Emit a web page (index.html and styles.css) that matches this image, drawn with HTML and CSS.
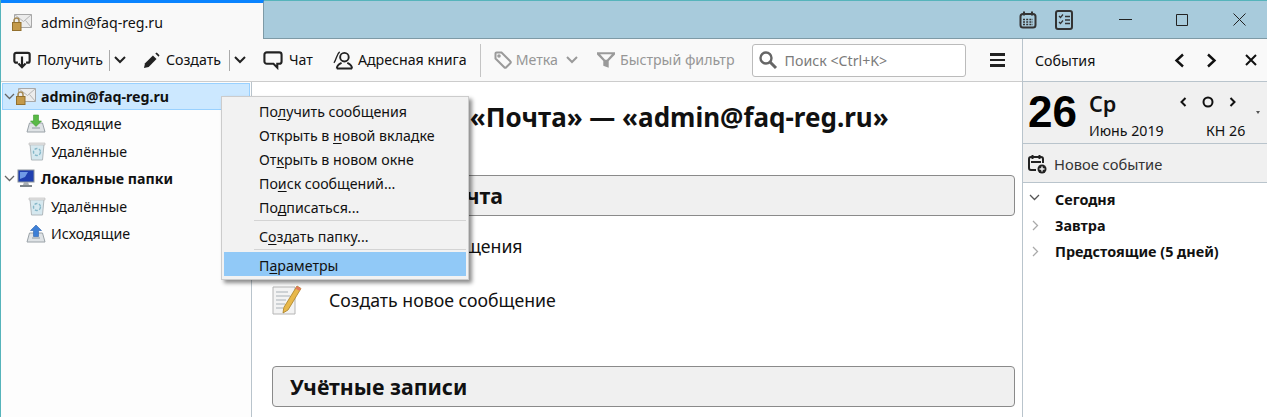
FILE: index.html
```html
<!DOCTYPE html>
<html lang="ru">
<head>
    <meta charset="UTF-8">
    <meta name="viewport" content="width=device-width, initial-scale=1.0">
    <title>admin@faq-reg.ru</title>
    <link rel="stylesheet" href="styles.css">
</head>
<body>
    <div class="window">
        <!-- Title bar with the open tab and window buttons -->
        <header class="titlebar">
            <div class="tab">
                <svg class="tab-icon" width="20" height="17" viewBox="0 0 20 17">
                    <path d="M2.5.5h17v13h-17z" fill="#ececec" stroke="#a8a8a8"/>
                    <path d="M2.5.5l9 7 8-7M19.500 13.500l-6-7" fill="none" stroke="#b4b4b4"/>
                    <path d="M2 9V6.500a2.500 2.500 0 0 1 5 0V9" fill="none" stroke="#a58a55" stroke-width="1.500"/>
                    <rect x=".5" y="8.500" width="8.500" height="8" fill="#c49a4a" stroke="#93702e"/>
                </svg>
                <span>admin@faq-reg.ru</span>
            </div>
            <div class="title-tools">
                <svg width="18" height="18" viewBox="0 0 18 18" fill="none" stroke="#333" stroke-width="2">
                    <rect x="1.500" y="3" width="15" height="13.500" rx="2.500"/>
                    <path d="M5 .5v4M13 .5v4"/>
                    <path d="M4 8.500h10M4 11h10M4 13.500h10" stroke-dasharray="2 1.200" stroke-width="1.600"/>
                </svg>
                <svg width="18" height="20" viewBox="0 0 18 20" fill="none" stroke="#333">
                    <rect x="1" y="1" width="16" height="18" rx="2" stroke-width="2"/>
                    <path d="M4 6l1.500 1.500L8 4.500M4 12l1.500 1.500L8 10.500" stroke-width="1.200"/>
                    <path d="M10 6.500h5M10 10h5M10 13.500h5" stroke-width="1.300"/>
                </svg>
            </div>
            <div class="win-buttons">
                <svg width="13" height="13" viewBox="0 0 13 13" fill="none" stroke="#222"><path d="M0 6.500h13"/></svg>
                <svg width="13" height="13" viewBox="0 0 13 13" fill="none" stroke="#222"><path d="M.5 1.500h11v11H.5z"/></svg>
                <svg width="13" height="13" viewBox="0 0 13 13" fill="none" stroke="#222"><path d="M.5.5l12 12M12.500.5l-12 12"/></svg>
            </div>
        </header>

        <div class="workspace">
            <div class="mail-area">
                <!-- Mail toolbar -->
                <div class="toolbar">
                    <svg class="tb-get" width="18" height="18" viewBox="0 0 20 20" fill="none" stroke="#222" stroke-width="2.400">
                        <path d="M5.500 13H3.500a2 2 0 0 1-2-2V4a2 2 0 0 1 2-2h13a2 2 0 0 1 2 2v7a2 2 0 0 1-2 2h-2"/>
                        <path d="M10 6v12M6 14l4 4 4-4"/>
                    </svg>
                    <span class="tb-label">Получить</span>
                    <span class="tb-split"></span>
                    <svg class="tb-drop" width="12" height="8" viewBox="0 0 12 8" fill="none" stroke="#222" stroke-width="2"><path d="M1 1l5 5 5-5"/></svg>
                    <svg class="tb-write" width="17" height="17" viewBox="0 0 18 18"><path d="M1 17l1.200-5L10.500 3.700l3.800 3.800L6 15.800z" fill="#222"/><path d="M13 1.500l1.500-1 3 3-1 1.500z" fill="#222"/></svg>
                    <span class="tb-label">Создать</span>
                    <span class="tb-split tb-split-2"></span>
                    <svg class="tb-drop tb-drop-2" width="12" height="8" viewBox="0 0 12 8" fill="none" stroke="#222" stroke-width="2"><path d="M1 1l5 5 5-5"/></svg>
                    <svg class="tb-chat" width="20" height="20" viewBox="0 0 21 20" fill="none" stroke="#222" stroke-width="2.200"><path d="M4 2h13a2.500 2.500 0 0 1 2.500 2.500v7A2.500 2.500 0 0 1 17 14h-2v4l-4-4H4a2.500 2.500 0 0 1-2.500-2.500v-7A2.500 2.500 0 0 1 4 2z"/></svg>
                    <span class="tb-label">Чат</span>
                    <svg class="tb-book" width="20" height="20" viewBox="0 0 21 20" fill="none" stroke="#222" stroke-width="2">
                        <circle cx="12" cy="7" r="4.500"/>
                        <path d="M4 19c0-4 3-5 5-6M20 19c0-4-3-5-5-6M4 19h16"/>
                        <path d="M7 1.500C3.500 4 4 9 1 13" stroke-width="1.400"/>
                    </svg>
                    <span class="tb-label">Адресная книга</span>
                    <span class="tb-sep"></span>
                    <svg class="tb-tag" width="18" height="18" viewBox="0 0 18 18" fill="none" stroke="#9a9a9a" stroke-width="2"><path d="M1.500 2.500a1 1 0 0 1 1-1h5L16.500 10.500a1 1 0 0 1 0 1.500l-4.500 4.500a1 1 0 0 1-1.500 0L1.500 7.500z"/><circle cx="5" cy="5" r=".8"/></svg>
                    <span class="tb-label off">Метка</span>
                    <svg class="tb-drop-off" width="12" height="8" viewBox="0 0 12 8" fill="none" stroke="#9a9a9a" stroke-width="2"><path d="M1 1l5 5 5-5"/></svg>
                    <svg class="tb-filter" width="18" height="18" viewBox="0 0 20 19" fill="#9a9a9a"><path d="M0 1h20v2.500l-7 7V18l-6-2v-5.500l-7-7zM3.500 3.200l5.500 6h2l5.500-6z" fill-rule="evenodd"/></svg>
                    <span class="tb-label off">Быстрый фильтр</span>
                    <div class="search">
                        <svg width="20" height="20" viewBox="0 0 20 20" fill="none" stroke="#666"><circle cx="8" cy="8" r="5.500" stroke-width="2.400"/><path d="M12 12l6 6" stroke-width="3"/></svg>
                        <span>Поиск &lt;Ctrl+K&gt;</span>
                    </div>
                    <div class="hamburger"><i></i><i></i><i></i></div>
                </div>

                <div class="panes">
                    <!-- Folder tree -->
                    <nav class="folders">
                        <div class="row account selected">
                            <svg class="twisty" width="11" height="7" viewBox="0 0 11 7" fill="none" stroke="#666" stroke-width="1.300"><path d="M1 1l4.500 4.500L10 1"/></svg>
                            <svg class="account-icon" width="20" height="17" viewBox="0 0 20 17">
                                <path d="M2.500.5h17v13h-17z" fill="#ececec" stroke="#a8a8a8"/>
                                <path d="M2.500.5l9 7 8-7M19.500 13.500l-6-7" fill="none" stroke="#b4b4b4"/>
                                <path d="M2 9V6.500a2.500 2.500 0 0 1 5 0V9" fill="none" stroke="#a58a55" stroke-width="1.500"/>
                                <rect x=".5" y="8.500" width="8.500" height="8" fill="#c49a4a" stroke="#93702e"/>
                            </svg>
                            <b>admin@faq-reg.ru</b>
                        </div>
                        <div class="row folder">
                            <svg width="20" height="20" viewBox="0 0 20 20">
                                <path d="M1 18l2.500-9h13l2.500 9z" fill="#dfe3e6" stroke="#9aa2a8"/>
                                <path d="M6 13h8v2H6z" fill="#b8bfc4"/>
                                <path d="M7.500 1h5v6h3L10 12.500 4.500 7h3z" fill="#58b947" stroke="#3f9a33" stroke-width=".6"/>
                            </svg>
                            <span>Входящие</span>
                        </div>
                        <div class="row folder">
                            <svg class="bin" width="18" height="20" viewBox="0 0 18 20">
                                <path d="M2 3h14l-1.500 16h-11z" fill="#d6e8ef" stroke="#b0b8bc"/>
                                <path d="M1 2h16v2H1z" fill="#e6e6e6" stroke="#b8b8b8" stroke-width=".6"/>
                                <circle cx="9" cy="11" r="3.500" fill="none" stroke="#86b8c9" stroke-width="1.400" stroke-dasharray="3 1.500"/>
                            </svg>
                            <span>Удалённые</span>
                        </div>
                        <div class="row account">
                            <svg class="twisty" width="11" height="7" viewBox="0 0 11 7" fill="none" stroke="#666" stroke-width="1.300"><path d="M1 1l4.500 4.500L10 1"/></svg>
                            <svg class="account-icon" width="20" height="19" viewBox="0 0 20 19">
                                <rect x="2" y="1" width="16" height="12" fill="#1f3fb0" stroke="#8b949b"/>
                                <path d="M4 3h8l-3 5-5 2z" fill="#6f9ae6"/>
                                <path d="M8 13h4l1 3H7z" fill="#a9afb4"/>
                                <path d="M4 16h12v2H4z" fill="#7d858b"/>
                            </svg>
                            <b>Локальные папки</b>
                        </div>
                        <div class="row folder">
                            <svg class="bin" width="18" height="20" viewBox="0 0 18 20">
                                <path d="M2 3h14l-1.500 16h-11z" fill="#d6e8ef" stroke="#b0b8bc"/>
                                <path d="M1 2h16v2H1z" fill="#e6e6e6" stroke="#b8b8b8" stroke-width=".6"/>
                                <circle cx="9" cy="11" r="3.500" fill="none" stroke="#86b8c9" stroke-width="1.400" stroke-dasharray="3 1.500"/>
                            </svg>
                            <span>Удалённые</span>
                        </div>
                        <div class="row folder">
                            <svg width="20" height="20" viewBox="0 0 20 20">
                                <path d="M1 18l2.500-9h13l2.500 9z" fill="#dfe3e6" stroke="#9aa2a8"/>
                                <path d="M6 13h8v2H6z" fill="#b8bfc4"/>
                                <path d="M7.500 12.500h5v-6h3L10 1 4.500 6.500h3z" fill="#3d7fd6" stroke="#2b62ad" stroke-width=".6"/>
                            </svg>
                            <span>Исходящие</span>
                        </div>
                    </nav>

                    <!-- Account overview page -->
                    <main class="content">
                        <h1>Thunderbird «Почта» — «admin@faq-reg.ru»</h1>
                        <h2 class="section first">Электронная почта</h2>
                        <div class="action action-read">Прочитать сообщения</div>
                        <div class="action">
                            <svg width="30" height="32" viewBox="0 0 30 32">
                                <path d="M1 3h22v27H1z" fill="#f3f3f3" stroke="#b5b5b5"/>
                                <path d="M4 8h12M4 12h14M4 16h10M4 20h9M4 24h7" stroke="#c2c8cc" stroke-width="1.500"/>
                                <path d="M25 2l4 2.500L16 26l-5 3 .8-5.500z" fill="#e8b84a" stroke="#a77f25" stroke-width=".8"/>
                                <path d="M25 2l4 2.500-1.500 2.500-4-2.500z" fill="#e2795e"/>
                            </svg>
                            <span>Создать новое сообщение</span>
                        </div>
                        <h2 class="section second">Учётные записи</h2>
                    </main>
                </div>
            </div>

            <!-- Events sidebar -->
            <aside class="events">
                <div class="events-head">
                    <span>События</span>
                    <svg class="ev-prev" width="11" height="15" viewBox="0 0 11 15" fill="none" stroke="#111" stroke-width="2.400"><path d="M9 1.500l-6.500 6 6.500 6"/></svg>
                    <svg class="ev-next" width="11" height="15" viewBox="0 0 11 15" fill="none" stroke="#111" stroke-width="2.400"><path d="M2 1.500l6.500 6-6.500 6"/></svg>
                    <svg class="ev-close" width="12" height="12" viewBox="0 0 12 12" fill="none" stroke="#111" stroke-width="2"><path d="M1 1l10 10M11 1L1 11"/></svg>
                </div>
                <div class="today">
                    <div class="day-num">26</div>
                    <div class="day-info">
                        <div class="day-name">Ср</div>
                        <div class="day-month">Июнь 2019</div>
                    </div>
                    <div class="day-side">
                        <div class="day-nav">
                            <svg width="7" height="10" viewBox="0 0 7 10" fill="none" stroke="#111" stroke-width="2"><path d="M5.500 1L1.500 5l4 4"/></svg>
                            <svg width="12" height="12" viewBox="0 0 12 12" fill="none" stroke="#111" stroke-width="2"><circle cx="6" cy="6" r="4.500"/></svg>
                            <svg width="7" height="10" viewBox="0 0 7 10" fill="none" stroke="#111" stroke-width="2"><path d="M1.500 1l4 4-4 4"/></svg>
                        </div>
                        <div class="week">КН 26</div>
                    </div>
                    <i class="today-menu"></i>
                </div>
                <div class="new-event">
                    <svg width="19" height="20" viewBox="0 0 19 20" fill="none" stroke="#222" stroke-width="2">
                        <path d="M8 16H3a2 2 0 0 1-2-2V5a2 2 0 0 1 2-2h10a2 2 0 0 1 2 2v4"/>
                        <path d="M4.500 1v4M11.500 1v4M3 8h10"/>
                        <circle cx="14" cy="15" r="4.500" fill="#222" stroke="none"/>
                        <path d="M14 12.500v5M11.500 15h5" stroke="#f0f0f0" stroke-width="1.400"/>
                    </svg>
                    <span>Новое событие</span>
                </div>
                <ul class="agenda">
                    <li><svg width="11" height="7" viewBox="0 0 11 7" fill="none" stroke="#555" stroke-width="1.300"><path d="M1 1l4.500 4.500L10 1"/></svg><b>Сегодня</b></li>
                    <li><svg width="7" height="11" viewBox="0 0 7 11" fill="none" stroke="#aaa" stroke-width="1.300"><path d="M1 1l4.500 4.500L1 10"/></svg><b>Завтра</b></li>
                    <li><svg width="7" height="11" viewBox="0 0 7 11" fill="none" stroke="#aaa" stroke-width="1.300"><path d="M1 1l4.500 4.500L1 10"/></svg><b>Предстоящие (5 дней)</b></li>
                </ul>
            </aside>
        </div>

        <!-- Context menu of the selected account -->
        <ul class="menu">
            <li>По<u>л</u>учить сообщения</li>
            <li>Открыть в <u>н</u>овой вкладке</li>
            <li>От<u>к</u>рыть в новом окне</li>
            <li>По<u>и</u>ск сообщений...</li>
            <li>По<u>д</u>писаться...</li>
            <li class="menu-sep"></li>
            <li>С<u>о</u>здать папку...</li>
            <li class="menu-sep menu-sep-2"></li>
            <li class="active">П<u>а</u>раметры</li>
        </ul>
    </div>
</body>
</html>
```

FILE: styles.css
```css
/* Basic page setup */
html, body {
    margin: 0;
    padding: 0;
    height: 100%;
    overflow: hidden;
}

body {
    font-family: "Noto Sans", "Open Sans", sans-serif;
    font-size: 14.2px;
    color: #111;
    background-color: #fff;
}

svg {
    display: block;
    flex: none;
}

.window {
    position: relative;
    height: 417px;
    border-left: 1px solid #56b4bb;
    box-sizing: border-box;
    display: flex;
    flex-direction: column;
    overflow: hidden;
}

/* Title bar */
.titlebar {
    height: 39px;
    box-sizing: border-box;
    flex: none;
    display: flex;
    align-items: center;
    background-color: #a8cbdc;
    border-top: 1px solid #56b4bb;
    border-bottom: 1px solid #7e9aa6;
}

.tab {
    width: 263px;
    height: 39px;
    margin-top: -1px;
    box-sizing: border-box;
    flex: none;
    align-self: flex-start;
    display: flex;
    align-items: center;
    padding: 3px 0 0 11px;
    background-color: #f9f9f9;
    border-top: 3px solid #0a84ff;
    border-right: 1px solid #7e9aa6;
}

.tab span {
    margin-left: 9px;
}

.title-tools {
    margin-left: 755px;
    display: flex;
    align-items: center;
    gap: 18px;
}

.win-buttons {
    margin-left: 46px;
    display: flex;
    align-items: center;
    gap: 44px;
}

/* Toolbar and panes */
.workspace {
    flex: 1;
    display: flex;
    min-height: 0;
}

.mail-area {
    width: 1021px;
    flex: none;
    display: flex;
    flex-direction: column;
}

.toolbar {
    height: 43px;
    box-sizing: border-box;
    flex: none;
    display: flex;
    align-items: center;
    background-color: #f9f9f9;
    border-bottom: 1px solid #ccc;
}

.tb-label {
    white-space: nowrap;
    line-height: 20px;
}

.tb-label.off {
    color: #969696;
}

.tb-get { margin: 0 6px 0 12px; }
.tb-split {
    width: 1px;
    height: 21px;
    margin: 0 4px 0 6px;
    background-color: #aaa;
}
.tb-split-2 { margin-left: 8px; }
.tb-write { margin: 0 6px 0 17px; }
.tb-chat { margin: 0 6px 0 17px; }
.tb-book { margin: 0 5px 0 20px; }
.tb-sep {
    width: 1px;
    height: 33px;
    margin: 0 13px;
    background-color: #c4c4c4;
}
.tb-tag { margin-right: 4px; }
.tb-drop-off { margin: 0 19px 0 8px; }
.tb-filter { margin-right: 5px; }

.search {
    width: 214px;
    height: 33px;
    box-sizing: border-box;
    margin-left: 17px;
    display: flex;
    align-items: center;
    gap: 7px;
    padding-left: 5px;
    background-color: #fff;
    border: 1px solid #bbb;
    border-radius: 3px;
    color: #7b7b7b;
}

.hamburger {
    margin-left: 24px;
    width: 15px;
    display: flex;
    flex-direction: column;
    gap: 3px;
}

.hamburger i {
    height: 2.5px;
    background-color: #222;
}

.panes {
    flex: 1;
    display: flex;
    min-height: 0;
}

/* Folder tree */
.folders {
    width: 251px;
    flex: none;
    box-sizing: border-box;
    padding: 1px 1px 0;
    background-color: #fdfdfd;
    border-right: 1px solid #b9c4cc;
}

.row {
    height: 27.5px;
    display: flex;
    align-items: center;
    box-sizing: border-box;
    white-space: nowrap;
}

.row.selected {
    height: 26.75px;
    background-color: #cce8ff;
    border: 1px solid #99d1ff;
}

.account {
    padding-left: 2px;
}

.selected {
    padding-left: 1px;
}

.twisty {
    margin-right: 1px;
}

.account-icon {
    margin-right: 5px;
}

.folder {
    padding-left: 24px;
}

.folder svg {
    margin-right: 5px;
}

.folder .bin {
    margin-left: 2px;
}

/* Account overview */
.content {
    flex: 1;
    min-width: 0;
    padding: 0 7px 0 20px;
    background-color: #fff;
}

h1 {
    margin: 16px 0 0 30px;
    font-size: 26px;
    line-height: 38px;
    white-space: nowrap;
}

.section {
    margin: 0;
    height: 41px;
    box-sizing: border-box;
    padding-left: 17px;
    font-size: 21.3px;
    line-height: 39px;
    background-color: #f0f0f0;
    border: 1px solid #8a8a8a;
    border-radius: 4px;
}

.section.first {
    margin-top: 39px;
}

.section.second {
    margin-top: 41px;
}

.action {
    height: 50px;
    display: flex;
    align-items: center;
    font-size: 17.7px;
    white-space: nowrap;
}

.action-read {
    padding-left: 57px;
    height: 59px;
}

.action span {
    margin-left: 27px;
}

/* Events sidebar */
.events {
    flex: 1;
    min-width: 0;
    display: flex;
    flex-direction: column;
    border-left: 1px solid #b9c4cc;
    background-color: #fff;
}

.events-head {
    height: 43px;
    box-sizing: border-box;
    flex: none;
    display: flex;
    align-items: center;
    padding-left: 12px;
    background-color: #f9f9f9;
    border-bottom: 1px solid #b9c4cc;
}

.ev-prev { margin-left: 79px; }
.ev-next { margin-left: 21px; }
.ev-close { margin-left: 28px; }

.today {
    height: 61px;
    flex: none;
    position: relative;
    display: flex;
    background-color: #f0f0f0;
    border-bottom: 1px solid #b9c4cc;
}

.day-num {
    width: 49px;
    margin: 3px 0 0 5px;
    font-family: "Liberation Sans", sans-serif;
    font-size: 44px;
    font-weight: bold;
    line-height: 54px;
    color: #000;
}

.day-info {
    width: 77px;
    flex: none;
    margin-left: 12px;
}

.day-name {
    margin-top: 9px;
    font-size: 21.5px;
    font-weight: 600;
    line-height: 26px;
}

.day-month {
    margin-top: 4px;
    line-height: 20px;
    white-space: nowrap;
}

.day-side {
    margin-left: 40px;
}

.day-nav {
    margin: 13px 0 0 -26px;
    display: flex;
    align-items: center;
    gap: 15px;
    height: 14px;
}

.week {
    margin-top: 12px;
    line-height: 20px;
    white-space: nowrap;
}

.today-menu {
    position: absolute;
    right: 7px;
    top: 29px;
    border: 2.5px solid transparent;
    border-top: 3px solid #555;
}

.new-event {
    height: 39px;
    box-sizing: border-box;
    flex: none;
    display: flex;
    align-items: center;
    gap: 7px;
    padding: 2px 0 0 5px;
    font-size: 14.7px;
    color: #333;
    background-color: #f0f0f0;
    border-bottom: 1px solid #b9c4cc;
}

.agenda {
    list-style: none;
    margin: 3px 0 0;
    padding: 0;
    font-size: 14.4px;
}

.agenda li {
    height: 26px;
    display: flex;
    align-items: center;
    position: relative;
    padding-left: 32px;
}

.agenda li svg {
    position: absolute;
    left: 9px;
    top: 8px;
}

.agenda li:first-child svg {
    left: 6px;
}

/* Context menu */
.menu {
    position: absolute;
    left: 220px;
    top: 96px;
    width: 248px;
    box-sizing: border-box;
    margin: 0;
    padding: 3px 2px;
    list-style: none;
    background-color: #f2f2f2;
    border: 1px solid #ccc;
    box-shadow: 3px 3px 4px rgba(0, 0, 0, 0.45);
}

.menu li {
    height: 24px;
    line-height: 24px;
    padding-left: 35px;
    color: #111;
    white-space: nowrap;
}

.menu u {
    text-underline-offset: 2px;
}

.menu .menu-sep {
    height: 1px;
    margin: 0 0 4px 30px;
    padding: 0;
    background-color: #d4d4d4;
}

.menu .menu-sep-2 {
    margin-bottom: 2px;
}

.menu .active {
    line-height: 27px;
    background-color: #91c9f7;
}
```
